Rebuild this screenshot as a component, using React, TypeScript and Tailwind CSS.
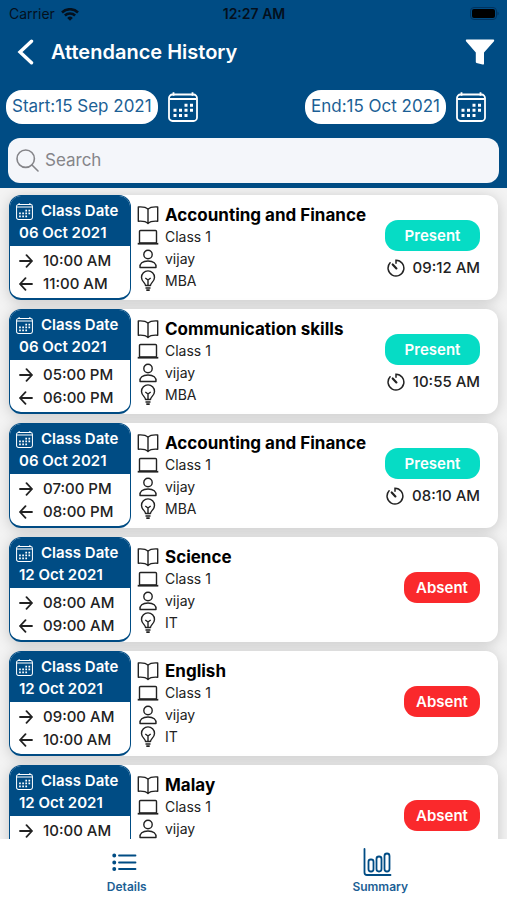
import { useState } from 'react';

interface AttendanceRecord {
  id: number;
  date: string;
  startTime: string;
  endTime: string;
  subject: string;
  room: string;
  teacher: string;
  course: string;
  status: 'Present' | 'Absent';
  markedAt?: string;
}

interface IconProps {
  className?: string;
}

const records: AttendanceRecord[] = [
  { id: 1, date: '06 Oct 2021', startTime: '10:00 AM', endTime: '11:00 AM', subject: 'Accounting and Finance', room: 'Class 1', teacher: 'vijay', course: 'MBA', status: 'Present', markedAt: '09:12 AM' },
  { id: 2, date: '06 Oct 2021', startTime: '05:00 PM', endTime: '06:00 PM', subject: 'Communication skills', room: 'Class 1', teacher: 'vijay', course: 'MBA', status: 'Present', markedAt: '10:55 AM' },
  { id: 3, date: '06 Oct 2021', startTime: '07:00 PM', endTime: '08:00 PM', subject: 'Accounting and Finance', room: 'Class 1', teacher: 'vijay', course: 'MBA', status: 'Present', markedAt: '08:10 AM' },
  { id: 4, date: '12 Oct 2021', startTime: '08:00 AM', endTime: '09:00 AM', subject: 'Science', room: 'Class 1', teacher: 'vijay', course: 'IT', status: 'Absent' },
  { id: 5, date: '12 Oct 2021', startTime: '09:00 AM', endTime: '10:00 AM', subject: 'English', room: 'Class 1', teacher: 'vijay', course: 'IT', status: 'Absent' },
  { id: 6, date: '12 Oct 2021', startTime: '10:00 AM', endTime: '11:00 AM', subject: 'Malay', room: 'Class 1', teacher: 'vijay', course: 'IT', status: 'Absent' },
];

const CalendarIcon = ({ className }: IconProps) => (
  <svg viewBox="0 0 30 30" fill="none" stroke="currentColor" strokeWidth="1.8" className={className} aria-hidden="true">
    <rect x="1" y="2.5" width="28" height="26.500" rx="3.5" />
    <path d="M1.5 7h27M5.5 0.2v3.500M24.5 0.2v3.500" />
    <path
      d="M16.500 13.300h3M22 13.300h3M5.500 18.300h3M11 18.300h3M16.500 18.300h3M22 18.300h3M5.500 23.500h3M11 23.500h3M16.500 23.500h3"
      strokeWidth="3"
    />
  </svg>
);

const BookIcon = ({ className }: IconProps) => (
  <svg viewBox="0 0 22 20" fill="none" stroke="currentColor" strokeWidth="1.4" strokeLinejoin="round" className={className} aria-hidden="true">
    <path d="M11 4.2C9 2.2 5.5 1.7 1.3 2v14.2c4.2-.3 7.7.2 9.7 2.2 2-2 5.5-2.5 9.7-2.2V2C16.5 1.7 13 2.2 11 4.2zM11 4.2v14.2" />
  </svg>
);

const LaptopIcon = ({ className }: IconProps) => (
  <svg viewBox="0 0 22 18" fill="none" stroke="currentColor" strokeWidth="1.4" className={className} aria-hidden="true">
    <rect x="2.5" y="2.500" width="17" height="12.500" rx="1" />
    <path d="M0.7 15.7h20.6" strokeWidth="1.8" />
  </svg>
);

const PersonIcon = ({ className }: IconProps) => (
  <svg viewBox="0 0 20 20" fill="none" stroke="currentColor" strokeWidth="1.4" strokeLinejoin="round" className={className} aria-hidden="true">
    <circle cx="10" cy="5.5" r="4.2" />
    <path d="M2 18.500c-.5-3.800 2.500-6.500 8-6.500s8.500 2.700 8 6.500z" />
  </svg>
);

const BulbIcon = ({ className }: IconProps) => (
  <svg viewBox="0 0 20 22" fill="none" stroke="currentColor" strokeWidth="1.4" strokeLinejoin="round" className={className} aria-hidden="true">
    <path d="M7.5 15.500c0-2.600-4-4-4-8.100a6.500 6.500 0 0 1 13 0c0 4.100-4 5.500-4 8.100z" />
    <path d="M10 15.500V9.500M7.300 8l2.700 2 2.700-2" />
    <path d="M7.500 18h5M8.300 20.200h3.400" strokeWidth="1.700" />
  </svg>
);

const TimerIcon = ({ className }: IconProps) => (
  <svg viewBox="0 0 18 18" fill="none" stroke="currentColor" strokeWidth="1.5" strokeLinecap="round" className={className} aria-hidden="true">
    <path d="M9 4.2V1.2a7.900 7.900 0 1 1-5.900 2.600" />
    <path d="M5.7 5.500l3.700 3.900" strokeWidth="2.2" />
  </svg>
);

const ArrowIcon = ({ className }: IconProps) => (
  <svg viewBox="0 0 14 14" fill="none" stroke="currentColor" strokeWidth="1.8" strokeLinecap="round" strokeLinejoin="round" className={className} aria-hidden="true">
    <path d="M1 7h12M7.500 1.200L13 7l-5.500 5.800" />
  </svg>
);

function StatusBar() {
  return (
    <div className="grid h-7 grid-cols-3 items-center pl-[9px] pr-2 text-sm text-[#04101d]">
      <div className="flex items-center gap-1.5">
        <span>Carrier</span>
        <svg viewBox="0 0 18 13" className="h-[13px] w-[18px]" fill="currentColor" aria-hidden="true">
          <path d="M9 12.800L6.200 9.900a4 4 0 0 1 5.600 0z" />
          <path d="M3.900 7.500a7.200 7.200 0 0 1 10.200 0M1 4.500a11.300 11.300 0 0 1 16 0" fill="none" stroke="currentColor" strokeWidth="2.500" />
        </svg>
      </div>
      <span className="text-center font-semibold">12:27 AM</span>
      <svg viewBox="0 0 30 14" className="h-[14px] w-[30px] justify-self-end" aria-hidden="true">
        <rect x="1.500" y="0.5" width="26" height="12" rx="3.5" fill="none" stroke="#00335f" />
        <rect x="3" y="2" width="23" height="9" rx="2" fill="#000" />
        <path d="M28.500 4.500v4c1.500-.5 1.500-3.500 0-4z" fill="#00335f" />
      </svg>
    </div>
  );
}

function DateButton({ label, value }: { label: string; value: string }) {
  return (
    <div className="flex items-center gap-2.5">
      <button type="button" className="h-[34px] rounded-2xl bg-white px-1.5 text-[17px] text-[#1c5f95]">
        {label}:{value}
      </button>
      <button type="button" aria-label={`Choose ${label.toLowerCase()} date`} className="text-white">
        <CalendarIcon className="size-[30px]" />
      </button>
    </div>
  );
}

function RecordCard({ record }: { record: AttendanceRecord }) {
  const present = record.status === 'Present';

  return (
    <li className="flex h-[105px] shrink-0 rounded-xl bg-white shadow-[0_2px_14px_rgba(0,0,0,0.18)]">
      <div className="flex w-[122px] shrink-0 flex-col overflow-hidden rounded-xl border border-b-2 border-[#004c84] bg-white">
        <div className="h-[50px] bg-[#004c84] pt-1 text-[15px] font-semibold leading-[22px] text-white">
          <div className="flex items-center gap-2 pl-1.5">
            <CalendarIcon className="size-[17px]" />
            <span>Class Date</span>
          </div>
          <p className="pl-[9px]">{record.date}</p>
        </div>
        <div className="pl-[9px] pt-[3px] text-[15px] font-medium leading-[23px] text-[#222]">
          <p className="flex items-center gap-2.5">
            <ArrowIcon className="size-[14px]" />
            {record.startTime}
          </p>
          <p className="flex items-center gap-2.5">
            <ArrowIcon className="size-[14px] rotate-180" />
            {record.endTime}
          </p>
        </div>
      </div>

      <div className="min-w-0 flex-1 pl-1.5 pt-[9px] text-sm leading-[22px] text-[#222]">
        <div className="flex items-center gap-1.5">
          <BookIcon className="h-5 w-[22px]" />
          <h2 className="text-[17px] font-bold text-black">{record.subject}</h2>
        </div>
        <p className="flex items-center gap-1.5">
          <LaptopIcon className="h-[18px] w-[22px]" />
          {record.room}
        </p>
        <p className="flex items-center gap-1.5">
          <PersonIcon className="h-5 w-[22px]" />
          {record.teacher}
        </p>
        <p className="flex items-center gap-1.5">
          <BulbIcon className="h-[22px] w-[22px]" />
          {record.course}
        </p>
      </div>

      <div className="flex shrink-0 flex-col items-end pr-[18px] pt-[25px]">
        {present ? (
          <>
            <span className="flex h-[31px] w-[95px] items-center justify-center rounded-[13px] bg-[#06dcc5] pt-px text-[15px] font-semibold text-white">
              Present
            </span>
            <p className="mt-[7px] flex items-center gap-2 text-[15px] font-medium leading-5 text-[#222]">
              <TimerIcon className="size-[18px]" />
              {record.markedAt}
            </p>
          </>
        ) : (
          <span className="mt-2.5 flex h-[31px] w-[76px] items-center justify-center rounded-[13px] bg-[#fa292c] pt-px text-[15px] font-semibold text-white">
            Absent
          </span>
        )}
      </div>
    </li>
  );
}

export default function App() {
  const [search, setSearch] = useState('');

  const visible = records.filter(record =>
    record.subject.toLowerCase().includes(search.toLowerCase())
  );

  return (
    <div className="flex h-screen flex-col bg-[#f3f3f3] font-['Inter','Liberation_Sans',sans-serif]">
      <header className="shrink-0 bg-[#004c84] pb-[5px]">
        <StatusBar />

        <div className="flex h-12 items-center pl-[17px] pr-3 text-white">
          <button type="button" aria-label="Back">
            <svg viewBox="0 0 18 26" className="h-[26px] w-[18px]" fill="none" stroke="currentColor" strokeWidth="3.4" strokeLinecap="round" aria-hidden="true">
              <path d="M14.500 2.200L3 13l11.500 10.800" />
            </svg>
          </button>
          <h1 className="flex-1 pl-4 text-xl font-semibold">Attendance History</h1>
          <button type="button" aria-label="Filter">
            <svg viewBox="0 0 30 26" className="h-[26px] w-[30px]" fill="currentColor" aria-hidden="true">
              <path d="M1.500 0.500h27q1.200.4.500 1.700L19 13.500V25q-.4.800-1.400.500L11.500 24q-.7-.3-.7-1V13.500L1 2.200Q.3.900 1.500.5z" />
            </svg>
          </button>
        </div>

        <div className="flex h-[62px] items-center justify-between pl-1.5 pr-[21px]">
          <DateButton label="Start" value="15 Sep 2021" />
          <DateButton label="End" value="15 Oct 2021" />
        </div>

        <label className="mx-2 flex h-[45px] items-center gap-1.5 rounded-xl bg-[#f4f6fa] px-2 text-[#858589]">
          <svg viewBox="0 0 23 23" className="size-[23px]" fill="none" stroke="currentColor" strokeWidth="1.6" strokeLinecap="round" aria-hidden="true">
            <circle cx="9.7" cy="9.7" r="8.7" />
            <path d="M16 16l6 6" />
          </svg>
          <input
            type="text"
            aria-label="Search"
            placeholder="Search"
            value={search}
            onChange={e => setSearch(e.target.value)}
            className="min-w-0 flex-1 bg-transparent text-[17px] text-[#222] outline-none placeholder:text-[#858589]"
          />
        </label>
      </header>

      <ul className="flex min-h-0 flex-1 flex-col gap-[9px] overflow-y-auto px-[9px] py-[7px] [scrollbar-width:none]">
        {visible.map(record => (
          <RecordCard key={record.id} record={record} />
        ))}
      </ul>

      <nav className="grid h-[61px] shrink-0 grid-cols-2 bg-white text-xs font-semibold text-[#1c5f95]">
        <button type="button" className="flex flex-col items-center pt-2">
          <svg viewBox="0 0 34 30" className="h-[30px] w-[34px]" fill="none" stroke="#004c84" strokeWidth="1.8" strokeLinecap="round" aria-hidden="true">
            <path d="M9 8.500h16.500M9 15.500h16.500M9 22h16.500" />
            <path d="M4.200 8.500h.1M4.200 15.500h.1M4.200 22h.1" strokeWidth="3.8" />
          </svg>
          <span className="pt-0.5">Details</span>
        </button>
        <button type="button" className="flex flex-col items-center pt-2">
          <svg viewBox="0 0 34 30" className="h-[30px] w-[34px]" fill="none" stroke="#004c84" strokeWidth="1.8" strokeLinecap="round" aria-hidden="true">
            <path d="M1.500 2v23.500q0 2.500 2.500 2.500h23.500" />
            <rect x="5.500" y="12.500" width="5" height="12" rx="2.2" />
            <rect x="13.500" y="9.500" width="5" height="15" rx="2.400" />
            <rect x="21.500" y="6.500" width="5" height="18" rx="2.500" />
          </svg>
          <span className="pt-0.5">Summary</span>
        </button>
      </nav>
    </div>
  );
}
